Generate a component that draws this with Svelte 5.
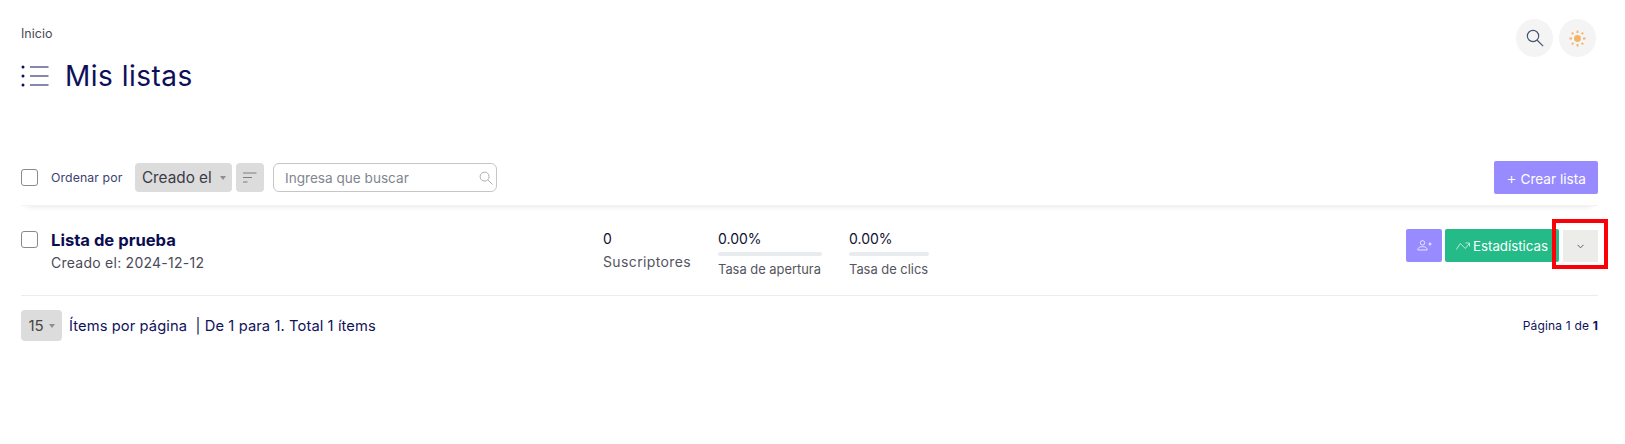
<script>
  const stats = [
    { value: '0.00%', label: 'Tasa de apertura', width: 104, gap: 27 },
    { value: '0.00%', label: 'Tasa de clics', width: 80, gap: 0 }
  ];
</script>

<div class="page">
  <header class="top">
    <div class="heading">
      <div class="crumb">Inicio</div>
      <div class="title-row">
        <svg class="list-icon" width="28" height="24" viewBox="0 0 28 24" fill="none">
          <g fill="#0d1058"><circle cx="2" cy="3" r="1.500"/><circle cx="2" cy="12" r="1.500"/><circle cx="2" cy="21" r="1.500"/></g>
          <g stroke="#0d1058" stroke-width="1.200"><path d="M9 3h18.500M9 12h18.500M9 21h18.500"/></g>
        </svg>
        <h1>Mis listas</h1>
      </div>
    </div>
    <div class="round-group">
      <button class="round" aria-label="Buscar">
        <svg width="18" height="18" viewBox="0 0 20 20" fill="none"><circle cx="7.800" cy="7.800" r="6.300" stroke="#44566c" stroke-width="1.300"/><path d="M12.500 12.500l6.500 6.500" stroke="#44566c" stroke-width="1.300"/></svg>
      </button>
      <button class="round" aria-label="Tema">
        <svg width="17" height="17" viewBox="0 0 20 20" fill="#f2b468"><circle cx="10" cy="10" r="4"/><g stroke="#f2b468" stroke-width="2.200"><path d="M10 0.500v3M10 16.500v3M0.500 10h3M16.500 10h3M3.200 3.200l2.100 1.400M14.700 15.400l2.100 1.400M16.800 3.200l-2.100 1.400M5.300 15.400l-2.100 1.400"/></g></svg>
      </button>
    </div>
  </header>

  <section class="toolbar">
    <span class="check"></span>
    <span class="sort-label">Ordenar por</span>
    <span class="select sort-select">Creado el <i class="caret"></i></span>
    <button class="sort-btn" aria-label="Orden">
      <svg width="14" height="11" viewBox="0 0 14 11" stroke="#666" stroke-width="0.800"><path d="M0 1h13.500M0 5.500h9M0 10h4.500"/></svg>
    </button>
    <div class="search">
      <span>Ingresa que buscar</span>
      <svg width="14" height="14" viewBox="0 0 15 15" fill="none" stroke="#a9a9a9" stroke-width="1"><circle cx="6" cy="6" r="4.800"/><path d="M9.500 9.500l5 5"/></svg>
    </div>
    <button class="create"><span class="plus">+</span> Crear lista</button>
  </section>

  <section class="row">
    <span class="check row-check"></span>
    <div class="name">
      <div class="list-name">Lista de prueba</div>
      <div class="created">Creado el: 2024-12-12</div>
    </div>
    <div class="subs">
      <div class="num">0</div>
      <div class="subs-label">Suscriptores</div>
    </div>
    {#each stats as s}
      <div class="stat" style="width:{s.width}px;margin-right:{s.gap}px">
        <div class="num">{s.value}</div>
        <div class="bar"></div>
        <div class="stat-label">{s.label}</div>
      </div>
    {/each}
    <div class="actions">
      <button class="act purple" aria-label="Añadir">
        <svg width="15" height="11" viewBox="0 0 15 11" fill="none" stroke="#fff" stroke-width="0.900" opacity="0.850"><circle cx="5.500" cy="2.800" r="2.200"/><path d="M0.800 10c0-2.400 2-3.400 4.700-3.400s4.700 1 4.700 3.400z"/><path d="M11.500 4h3M13 2.500v3" stroke-width="1.200"/></svg>
      </button>
      <button class="act green">
        <svg width="14" height="8" viewBox="0 0 14 8" fill="none" stroke="#fff" stroke-width="0.800" opacity="0.850"><path d="M0.300 7.500l4-6 5 5 4-5M9.500 1h4v3.500"/></svg>
        Estadísticas
      </button>
      <div class="more-wrap">
        <button class="act grey" aria-label="Más">
          <svg width="7" height="5" viewBox="0 0 7 5" fill="none" stroke="#5b5b66" stroke-width="1"><path d="M0.500 0.800l3 3 3-3"/></svg>
        </button>
        <span class="highlight"></span>
      </div>
    </div>
  </section>

  <footer class="pager">
    <span class="select per-page">15 <i class="caret"></i></span>
    <span class="per-text">Ítems por página &nbsp;| De 1 para 1. Total 1 ítems</span>
    <span class="page-no">Página 1 de <b>1</b></span>
  </footer>
</div>

<style>
  :global(body) { margin: 0; background: #fff; }
  .page {
    width: 1577px;
    height: 444px;
    padding: 0 27px 0 21px;
    font-family: Inter, "Liberation Sans", sans-serif;
    color: #0d1058;
    overflow: hidden;
  }
  button { border: 0; padding: 0; font: inherit; }

  .top { display: flex; justify-content: space-between; height: 161px; }
  .heading { padding-top: 26px; }
  .crumb { font-size: 12.500px; line-height: 16px; color: #4a4a55; }
  .title-row { display: flex; align-items: center; gap: 16px; margin-top: 14px; }
  .list-icon { width: 28px; height: 24px; }
  h1 { margin: 0; font-size: 28px; font-weight: 400; line-height: 40px; letter-spacing: 0.500px; }
  .round-group { display: flex; gap: 6px; padding-top: 19px; padding-right: 2px; }
  .round {
    width: 37px; height: 38px; border-radius: 50%; background: #f4f4f4;
    display: flex; align-items: center; justify-content: center;
  }

  .toolbar {
    display: flex; align-items: center;
    height: 33px;
    padding-bottom: 11px;
    box-shadow: 0 6px 6px -6px rgba(0,0,0,.12);
    border-bottom: 1px solid #f3f3f3;
  }
  .check {
    display: block; width: 15px; height: 15px; flex: none;
    border: 1px solid #8a8a8a; border-radius: 3px; background: #fff;
  }
  .sort-label { margin-left: 13px; font-size: 12.300px; color: #3c4270; width: 84px; letter-spacing: 0.100px; }
  .select {
    display: flex; align-items: center; justify-content: center;
    background: #dcdcdc; border-radius: 4px; color: #3a3a48;
  }
  .sort-select { width: 96px; height: 29px; font-size: 15.300px; gap: 4px; margin-right: 4px; padding-left: 1px; white-space: pre; }
  .caret {
    display: inline-block; width: 0; height: 0;
    border: 3px solid transparent; border-top: 4px solid #8e8e8e; border-bottom: 0;
  }
  .sort-btn {
    width: 28px; height: 29px; background: #dcdcdc; border-radius: 4px;
    display: flex; align-items: center; justify-content: center;
  }
  .search {
    margin-left: 9px; height: 27px;
    border: 1px solid #c6c6c6; border-radius: 6px; background: #fff;
    display: flex; align-items: center; justify-content: space-between;
    padding: 0 3px 0 11px; width: 208px;
    font-size: 13.600px; color: #7f8690;
  }
  .create {
    margin-left: auto; width: 104px; height: 33px;
    background: #988bff; color: #fff; border-radius: 2px; font-size: 13.600px;
  }
  .plus { font-weight: 300; font-size: 16px; }

  .row {
    display: flex; align-items: flex-start;
    height: 90px;
    border-bottom: 1px solid #ececec;
    box-sizing: border-box;
  }
  .row-check { margin-top: 25px; }
  .name { margin-left: 13px; width: 552px; padding-top: 23px; }
  .list-name { font-size: 16.600px; font-weight: 700; line-height: 22px; color: #0b0d52; }
  .created { font-size: 14px; line-height: 20px; margin-top: 2px; color: #4b4b57; letter-spacing: 0.250px; }
  .subs { width: 115px; padding-top: 23px; }
  .num { font-size: 14px; line-height: 20px; color: #0f1130; }
  .subs-label { font-size: 14px; line-height: 20px; margin-top: 3px; color: #55555f; letter-spacing: 0.380px; white-space: nowrap; }
  .stat { padding-top: 23px; }
  .bar { height: 4px; border-radius: 2px; background: #e9ecef; margin-top: 3px; }
  .stat-label { font-size: 12.900px; line-height: 16px; margin-top: 6px; color: #55555f; white-space: nowrap; }

  .actions { margin-left: auto; display: flex; align-items: center; padding-top: 23px; }
  .act { height: 33px; display: flex; align-items: center; justify-content: center; border-radius: 2px; }
  .purple { width: 36px; background: #988bff; margin-right: 3px; }
  .green { width: 114px; background: #24bb88; color: #fff; font-size: 13.300px; gap: 3px; }
  .more-wrap { position: relative; margin-left: 4px; }
  .grey { width: 35px; height: 32px; background: #ecece8; margin-top: 1px; border-radius: 0; }
  .highlight {
    position: absolute; left: -11px; top: -10px; width: 48px; height: 42px;
    border: 4px solid #fb0007; pointer-events: none;
  }

  .pager { display: flex; align-items: center; padding-top: 14px; }
  .per-page { width: 41px; height: 31px; font-size: 15px; gap: 5px; color: #444; }
  .per-text { margin-left: 7px; font-size: 14.700px; letter-spacing: 0.100px; color: #10125c; white-space: pre; }
  .page-no { margin-left: auto; font-size: 12px; color: #10125c; letter-spacing: 0.170px; }
  .page-no b { font-weight: 700; }
</style>
